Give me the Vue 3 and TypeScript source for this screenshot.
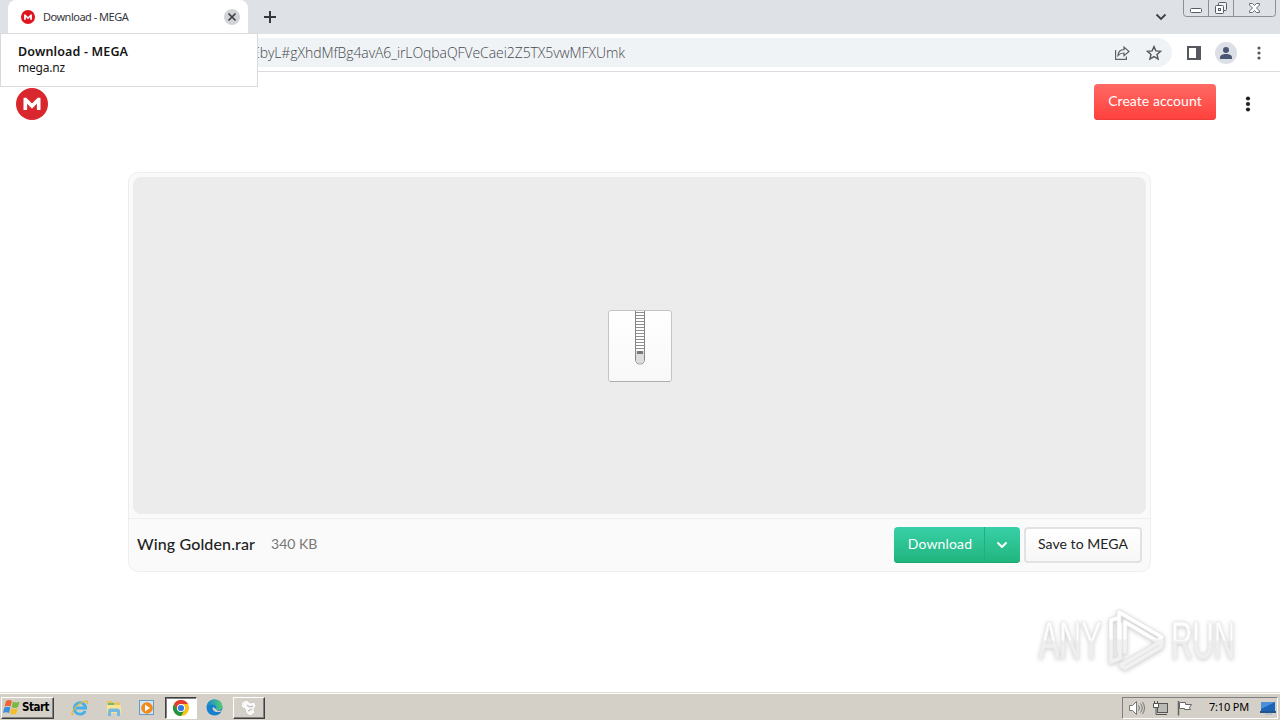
<script setup lang="ts">
const address = 'EbyL#gXhdMfBg4avA6_irLOqbaQFVeCaei2Z5TX5vwMFXUmk'
const zipTeeth: number[] = Array.from({ length: 13 }, (_, i) => 3.5 + i * 3)
</script>

<template>
  <div class="screen">
    <header class="tabstrip">
      <div class="tab">
        <svg class="favicon" width="14" height="14" viewBox="0 0 32 32">
          <circle cx="16" cy="16" r="16" fill="#e0141e" />
          <path d="M7 22V10h3l6 6 6-6h3v12h-4v-6l-5 5-5-5v6z" fill="#fff" />
        </svg>
        <span class="tab-title">Download - MEGA</span>
        <svg class="tab-close" width="16" height="16" viewBox="0 0 16 16">
          <circle cx="8" cy="8" r="8" fill="#d2d4d7" />
          <path d="M4.5 4.5l7 7M11.5 4.5l-7 7" stroke="#3c4043" stroke-width="1.7" />
        </svg>
      </div>
      <svg class="new-tab" width="14" height="14" viewBox="0 0 14 14">
        <path d="M7 1v12M1 7h12" stroke="#35383c" stroke-width="2" />
      </svg>
      <svg class="tab-search" width="12" height="8" viewBox="0 0 12 8">
        <path d="M1.5 1.5L6 6l4.500-4.500" fill="none" stroke="#3c4043" stroke-width="1.8" />
      </svg>
      <svg class="window-controls" width="94" height="18" viewBox="0 0 94 18">
        <path d="M.5 0v13.500q0 3 3 3h86q3 0 3-3V0M25.500 0v16M50.500 0v16" fill="none" stroke="#8b8f96" />
        <rect x="7.500" y="8.500" width="11" height="4" rx="1" fill="#fff" stroke="#575b62" />
        <rect x="35.500" y="2.500" width="8" height="8" rx="1" fill="#eef0f3" stroke="#575b62" />
        <rect x="32.500" y="5.500" width="8" height="8" rx="1" fill="#fff" stroke="#575b62" />
        <rect x="35.500" y="8.500" width="2" height="2" fill="#fff" stroke="#575b62" />
        <path d="M66.500 3.500h3l2 2 2-2h3v1.500l-3 3 3 3v1.500h-3l-2-2-2 2h-3V11l3-3-3-3z" fill="#fff" stroke="#686c73" />
      </svg>
    </header>

    <div class="toolbar">
      <div class="omnibox">
        <span class="address">{{ address }}</span>
        <svg class="share" width="16" height="16" viewBox="0 0 16 16" fill="none" stroke="#5f6368" stroke-width="1.200">
          <path d="M1.600 5v9.400h10.800v-3" />
          <path d="M4 10.500c.4-4 2.500-5.800 6-5.800V2l5 4.500-5 4.300V8C7.200 8 5.500 8.800 4 10.500z" />
        </svg>
        <svg class="star" width="16" height="16" viewBox="0 0 16 16">
          <path d="M8 1.600l1.900 4.300 4.700.4L11 9.400l1.100 4.700L8 11.600l-4.100 2.500L5 9.400 1.400 6.300l4.700-.4z" fill="none" stroke="#55595e" stroke-width="1.400" />
        </svg>
      </div>
      <svg class="side-panel" width="14" height="14" viewBox="0 0 14 14">
        <path d="M1 1h12v12H1z" fill="none" stroke="#55595e" stroke-width="2" />
        <path d="M9 1h4v12H9z" fill="#55595e" />
      </svg>
      <svg class="profile" width="22" height="22" viewBox="0 0 22 22">
        <circle cx="11" cy="11" r="11" fill="#dce0e6" />
        <circle cx="11" cy="8" r="3" fill="#485673" />
        <path d="M5 17v-1.500c0-2.500 3-3.500 6-3.500s6 1 6 3.500V17z" fill="#485673" />
      </svg>
      <svg class="browser-menu" width="4" height="14" viewBox="0 0 4 14" fill="#55595e">
        <circle cx="2" cy="2" r="1.600" /><circle cx="2" cy="7" r="1.600" /><circle cx="2" cy="12" r="1.600" />
      </svg>
    </div>

    <aside class="tab-tooltip">
      <strong>Download - MEGA</strong>
      <span>mega.nz</span>
    </aside>

    <main class="page">
      <div class="site-header">
        <svg width="32" height="32" viewBox="0 0 32 32">
          <circle cx="16" cy="16" r="16" fill="#d9272e" />
          <path d="M7.500 21.500V10.300q0-.6.6-.6h2.200l5.700 5.700 5.700-5.700h2.200q.6 0 .6.600v11.200q0 .5-.5.500h-2.600q-.5 0-.5-.5v-5.800l-4.500 4.500q-.4.400-.8 0l-4.500-4.500v5.800q0 .5-.5.500H8q-.5 0-.5-.5z" fill="#fff" />
        </svg>
        <button class="create">Create account</button>
        <svg class="site-menu" width="6" height="16" viewBox="0 0 6 16" fill="#222">
          <circle cx="3" cy="2.500" r="2.100" /><circle cx="3" cy="8" r="2.100" /><circle cx="3" cy="13.500" r="2.100" />
        </svg>
      </div>

      <section class="file-card">
        <div class="preview">
          <svg width="66" height="74" viewBox="0 0 66 74">
            <defs>
              <linearGradient id="paper" x1="0" y1="0" x2="0" y2="1">
                <stop offset="0" stop-color="#fff" /><stop offset="1" stop-color="#f8f8f8" />
              </linearGradient>
            </defs>
            <rect x="1.500" y="1.500" width="63" height="71" rx="2.500" fill="url(#paper)" stroke="#c4c4c4" />
            <path d="M3 72.500h60" stroke="#adadad" />
            <path d="M28.500 2v48q0 5 4.500 5t4.500-5V2" fill="#fff" stroke="#858585" />
            <path v-for="y in zipTeeth" :key="y" :d="`M29 ${y}h8`" stroke="#8d8d8d" />
            <path d="M29 42h8v8q0 4.500-4 4.500T29 50z" fill="#ddd" />
            <rect x="30" y="42" width="6" height="3" rx=".5" fill="#777" />
          </svg>
        </div>
        <div class="file-bar">
          <span class="file-name">Wing Golden.rar</span>
          <span class="file-size">340 KB</span>
          <div class="download">
            <span class="download-label">Download</span>
            <span class="download-more">
              <svg width="12" height="8" viewBox="0 0 12 8">
                <path d="M2 2l4 4 4-4" fill="none" stroke="#fff" stroke-width="2" stroke-linecap="round" stroke-linejoin="round" />
              </svg>
            </span>
          </div>
          <button class="save">Save to MEGA</button>
        </div>
      </section>

      <div class="watermark">
        <div class="word"><span>ANY</span></div>
        <svg width="60" height="64" viewBox="0 0 60 64" fill="none" stroke-linejoin="round" stroke-linecap="round">
          <defs>
            <linearGradient id="sheen" gradientUnits="userSpaceOnUse" x1="0" y1="0" x2="0" y2="64">
              <stop offset=".48" stop-color="#fff" /><stop offset=".5" stop-color="#f1f1f1" />
            </linearGradient>
          </defs>
          <g stroke="#e4e4e4" stroke-width="5">
            <path d="M12 44V4l43 25-5 4-32-19v30M11 10L4 12v42l9-4V16" />
            <path d="M55 33L14 57l4 3 36-21z" />
          </g>
          <g stroke="url(#sheen)" stroke-width="3.500">
            <path d="M12 44V4l43 25-5 4-32-19v30M11 10L4 12v42l9-4V16" />
            <path d="M55 33L14 57l4 3 36-21z" />
          </g>
        </svg>
        <div class="word"><span class="run">RUN</span></div>
      </div>
    </main>

    <footer class="taskbar">
      <div class="start">
        <svg width="18" height="17" viewBox="0 0 18 17">
          <path d="M3 2q3-2 6 0L7.600 7.500q-3-1.500-6 0z" fill="#ef6432" />
          <path d="M10 2.500q3 2 6.500 0L15 8q-3 1.800-6.300 0z" fill="#79b943" />
          <path d="M1.400 8.500q3-1.600 6 0L6 14q-3-1.500-6 0z" fill="#3d8edb" />
          <path d="M8.500 9q3 1.800 6.300 0l-1.500 5.500q-3 1.800-6.200 0z" fill="#f5bd27" />
        </svg>
        <span>Start</span>
      </div>
      <div class="launch">
        <svg width="18" height="18" viewBox="0 0 18 18">
          <path d="M14.200 11.800A5.700 5.700 0 1 1 14.700 9H5" fill="none" stroke="#45b1e8" stroke-width="2.800" />
          <path d="M3 15C-1.500 17 2 8.500 9 4.500s9-2.500 7 .5" fill="none" stroke="#e7b83b" stroke-width="1.300" />
        </svg>
      </div>
      <div class="launch">
        <svg width="18" height="18" viewBox="0 0 18 18">
          <path d="M2 2h5l1 1.500h7V14H2z" fill="#e8c65e" />
          <path d="M3 4h6v3H3z" fill="#77b867" />
          <path d="M2 6h14v8H2z" fill="#f8e494" />
          <path d="M3 17v-5q0-2.500 2.500-2.500h7Q15 9.500 15 12v5h-3v-4H6v4z" fill="#75b9df" />
        </svg>
      </div>
      <div class="launch">
        <svg width="18" height="18" viewBox="0 0 18 18">
          <rect x="1.500" y="1.500" width="14" height="14" fill="#d5e6f3" stroke="#649cc7" />
          <circle cx="9" cy="9" r="5.800" fill="#f28a19" />
          <path d="M7 5.500l5 3.500-5 3.500z" fill="#fff" />
        </svg>
      </div>
      <div class="task active">
        <svg width="16" height="16" viewBox="0 0 16 16">
          <circle cx="8" cy="8" r="8" fill="#fbc116" />
          <path d="M1.070 4A8 8 0 0 1 14.930 4H8L4.540 10z" fill="#e33b2e" />
          <path d="M1.070 4A8 8 0 0 0 8 16l3.460-6H4.540z" fill="#229342" />
          <circle cx="8" cy="8" r="4" fill="#fff" /><circle cx="8" cy="8" r="3.100" fill="#3478e5" />
        </svg>
      </div>
      <div class="launch edge">
        <svg width="17" height="17" viewBox="0 0 17 17">
          <defs>
            <linearGradient id="edge" x1="0" y1="0" x2="1" y2="0">
              <stop offset="0" stop-color="#1589cf" /><stop offset="1" stop-color="#58cc72" />
            </linearGradient>
          </defs>
          <circle cx="8.500" cy="8.500" r="8" fill="#1680cc" />
          <path d="M.7 8C1 3 4.500.5 8.500.5c5 0 8 3.500 8 7 0 3-3 4.500-6 3.500-1.300-.5-.2-1.300-.2-2.500C10 5 4 4 .7 8z" fill="url(#edge)" />
          <path d="M7 8c-1.500 3 2 6.500 8.500 4.500l1.500-2c-3 2.500-7 1-7-.5z" fill="#d4d0c8" />
        </svg>
      </div>
      <div class="task">
        <svg width="20" height="18" viewBox="0 0 20 18">
          <path d="M3 3l5-2 3 3 5-1 1 4-2 3 1 4-5 3-4-3-1-4-4-2z" fill="#f8f8f7" stroke="#c1bfbb" stroke-width=".7" />
          <path d="M8 6l3 2 3-1M9 12l4-2" fill="none" stroke="#aaa" />
        </svg>
      </div>
      <div class="tray">
        <svg width="17" height="16" viewBox="0 0 17 16" fill="none" stroke="#777">
          <path d="M1.500 5.500h3l4-4v13l-4-4h-3z" fill="#fff" />
          <path d="M10.500 5.500q2 2.500 0 5M12.500 3.500q3.500 4.500 0 9M14.500 2q4 6 0 12" />
        </svg>
        <svg width="17" height="16" viewBox="0 0 17 16" fill="none" stroke="#555">
          <rect x="5.500" y="3.500" width="10" height="9" fill="#b9b9b5" />
          <path d="M7 14.500h8M1.500 3.500h5v4h-5zM2.500 1v2M5.500 1v2M4 8v6.500h4" />
          <path d="M2 4h4v3H2z" fill="#fff" stroke="none" />
        </svg>
        <svg width="17" height="16" viewBox="0 0 17 16" stroke="#666">
          <path d="M2.500 1v14.500" stroke-width="1.500" />
          <path d="M3.500 2.500h6v2h6l-2 3 1 2h-6v-1h-5z" fill="#fff" />
        </svg>
        <time>7:10 PM</time>
        <svg class="desktop" width="16" height="14" viewBox="0 0 16 14">
          <path d="M1 1h14v9H1z" fill="#1b64b8" /><path d="M1 1h14L1 8z" fill="#4b91d9" />
          <path d="M0 10h16v2H0z" fill="#24558c" /><path d="M5 13h7" stroke="#9bb2c9" />
        </svg>
      </div>
    </footer>
  </div>
</template>

<style>
body { margin: 0; overflow: hidden; }
</style>

<style scoped>
* { box-sizing: border-box; }
svg { display: block; flex: none; }
button { margin: 0; padding: 0; font: inherit; }
.screen { position: relative; width: 1280px; height: 720px; display: flex; flex-direction: column; background: #fff; overflow: hidden; font-family: "DejaVu Sans Condensed", "DejaVu Sans", sans-serif; }
.tabstrip { height: 34px; flex: none; background: #dee1e6; display: flex; align-items: center; padding-left: 8px; }
.tab { width: 240px; height: 34px; background: #fff; border-radius: 8px 8px 0 0; display: flex; align-items: center; padding: 0 8px 0 13px; }
.tab-title { margin-left: 8px; padding-bottom: 2px; font: 11px "Noto Sans", sans-serif; letter-spacing: -.5px; color: #34373b; white-space: nowrap; }
.tab-close { margin-left: auto; }
.new-tab { margin-left: 15px; }
.tab-search { margin-left: auto; }
.window-controls { margin-left: 16px; margin-right: 3px; align-self: flex-start; }
.toolbar { height: 38px; flex: none; border-bottom: 1px solid #dadce0; display: flex; align-items: center; }
.omnibox { height: 29px; width: 1072px; margin-left: 100px; border-radius: 15px; background: #f0f3f5; display: flex; align-items: center; padding-left: 152px; }
.address { font: 300 14px "Open Sans", sans-serif; color: #44484d; letter-spacing: -.08px; white-space: nowrap; }
.share { margin-left: auto; }
.star { margin-left: 16px; margin-right: 10px; }
.side-panel { margin-left: 15px; }
.profile { margin-left: 14px; }
.browser-menu { margin-left: 20px; }
.tab-tooltip { position: absolute; left: 0; top: 33px; width: 258px; height: 54px; border: 1px solid #d7d9dc; background: #fff; padding: 10px 17px; display: flex; flex-direction: column; color: #161616; z-index: 2; }
.tab-tooltip strong { font: 600 12.500px/16px "Noto Sans", sans-serif; letter-spacing: .15px; }
.tab-tooltip span { font: 12px/16px "Noto Sans", sans-serif; letter-spacing: -.2px; }
.page { flex: 1; display: flex; flex-direction: column; align-items: center; font-family: Lato, sans-serif; position: relative; }
.site-header { align-self: stretch; height: 64px; display: flex; align-items: center; padding: 0 29px 0 16px; }
.create { width: 122px; height: 36px; margin: -4px 29px 0 auto; padding-bottom: 3px; border: 0; border-radius: 4px; background: linear-gradient(#ff6a64, #ff403c); color: #fff; font-size: 14px; letter-spacing: .05px; box-shadow: inset 0 -1px #ed3d3b; }
.file-card { margin: 36px 1px 0 0; width: 1023px; height: 400px; border: 1px solid #eee; border-radius: 10px; background: #fafafa; display: flex; flex-direction: column; }
.preview { margin: 4px; height: 337px; border-radius: 8px; background: #ececec; display: flex; align-items: center; justify-content: center; }
.file-bar { flex: 1; border-top: 1px solid #eee; display: flex; align-items: center; padding: 0 8px; }
.file-name { padding-bottom: 4px; font-size: 16px; font-weight: 500; letter-spacing: .13px; color: #222; white-space: nowrap; }
.file-size { margin-left: 16px; padding-bottom: 4px; font-size: 14px; color: #777; white-space: nowrap; }
.download { margin-left: auto; width: 126px; height: 36px; border-radius: 4px; background: linear-gradient(#38d0a8, #20b47c); box-shadow: inset 0 -1px #1aa773; color: #fff; display: flex; }
.download-label { flex: 1; display: flex; align-items: center; justify-content: center; padding: 0 0 3px 2px; font-size: 14px; letter-spacing: .15px; border-right: 1px solid #26ad7c; }
.download-more { width: 35px; display: flex; align-items: center; justify-content: center; padding-right: 2px; }
.save { width: 118px; height: 36px; margin-left: 4px; padding-bottom: 3px; border: 2px solid #e2e2e2; border-radius: 4px; background: linear-gradient(#fff, #f7f7f7); color: #222; font-size: 14px; letter-spacing: .05px; }
.watermark { position: absolute; left: 1039px; top: 536px; display: flex; align-items: center; gap: 4px; font: 52px/64px "Liberation Sans", sans-serif; filter: drop-shadow(0 1px 2px #ccc); }
.word { width: 64px; height: 64px; }
.word span { display: inline-block; transform: scaleX(.585); transform-origin: 0 50%; white-space: nowrap; color: transparent; background: linear-gradient(#fff 50%, #efefef 52%); background-clip: text; -webkit-background-clip: text; -webkit-text-stroke: 1px #ececec; }
.word .run { transform: scaleX(.57); }
.taskbar { height: 28px; flex: none; background: #d4d0c8; border-top: 1px solid #dedbd4; box-shadow: inset 0 1px #fff; display: flex; align-items: center; padding: 2px 2px 0 1px; }
.start { width: 53px; height: 22px; border: 1px solid; border-color: #fff #404040 #404040 #fff; box-shadow: inset -1px -1px #808080; display: flex; align-items: center; gap: 1px; padding-left: 1px; font: bold 11.500px "DejaVu Sans Condensed", sans-serif; color: #000; margin-right: 17px; }
.start span { letter-spacing: -.5px; padding-bottom: 1px; }
.launch { width: 18px; margin-right: 15.500px; }
.task { width: 32px; height: 22px; border: 1px solid; border-color: #fff #404040 #404040 #fff; box-shadow: inset -1px -1px #808080; display: flex; align-items: center; justify-content: center; }
.task.active { background: #fff; border-color: #404040 #fff #fff #404040; box-shadow: inset 1px 1px #808080; margin: 0 9px 0 -7px; }
.launch.edge { margin-right: 9px; }
.tray { margin-left: auto; width: 156px; height: 22px; border: 1px solid; border-color: #808080 #fff #fff #808080; display: flex; align-items: center; gap: 7px; padding-left: 5px; }
.tray time { margin-left: 9px; padding-bottom: 2px; font: 11px "Noto Sans", sans-serif; letter-spacing: -.2px; color: #000; white-space: nowrap; width: 41px; }
.desktop { margin-left: 3px; }
</style>
